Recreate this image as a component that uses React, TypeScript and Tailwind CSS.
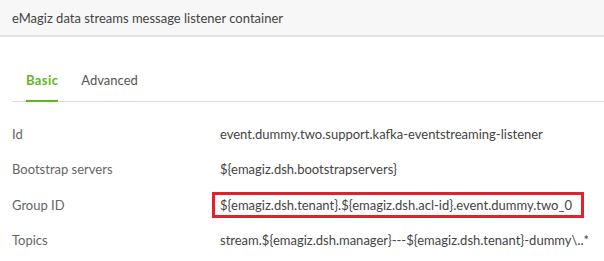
export default function App() {
  const rows = [
    { label: "Id", value: "event.dummy.two.support.kafka-eventstreaming-listener" },
    { label: "Bootstrap servers", value: "${emagiz.dsh.bootstrapservers}" },
    { label: "Group ID", value: "${emagiz.dsh.tenant}.${emagiz.dsh.acl-id}.event.dummy.two_0", boxed: true },
    { label: "Topics", value: "stream.${emagiz.dsh.manager}---${emagiz.dsh.tenant}-dummy\\..*" },
  ];

  return (
    <div className="w-[604px] h-[261px] bg-white overflow-hidden font-['Lato',sans-serif] text-[13px] leading-[20px] whitespace-nowrap">
      <div className="h-[37px] bg-[#f7f7f7] border-b-2 border-[#e4e4e4] flex items-center pl-3 text-[#444]">
        eMagiz data streams message listener container
      </div>

      <div className="ml-3 mt-[33px] border-b border-[#dcdcdc] flex gap-[23px] pl-[14px]">
        <div className="pb-[10px] border-b-2 border-[#63b51c] -mb-px font-bold text-[#63b51c] tracking-[0.4px]">Basic</div>
        <div className="pb-[10px] text-[#555]">Advanced</div>
      </div>

      <div className="mt-[14px] flex flex-col">
        {rows.map((r) => (
          <div key={r.label} className="h-[35.5px] flex items-center">
            <div className="w-[212px] shrink-0 pl-3 text-[#666]">{r.label}</div>
            {r.boxed ? (
              <div className="h-[26px] w-[372px] shrink-0 border-[3px] border-[#e3202b] flex items-center pl-[5px] text-[#444]">
                {r.value}
              </div>
            ) : (
              <div className="pl-2 text-[#444]">{r.value}</div>
            )}
          </div>
        ))}
      </div>
    </div>
  );
}
